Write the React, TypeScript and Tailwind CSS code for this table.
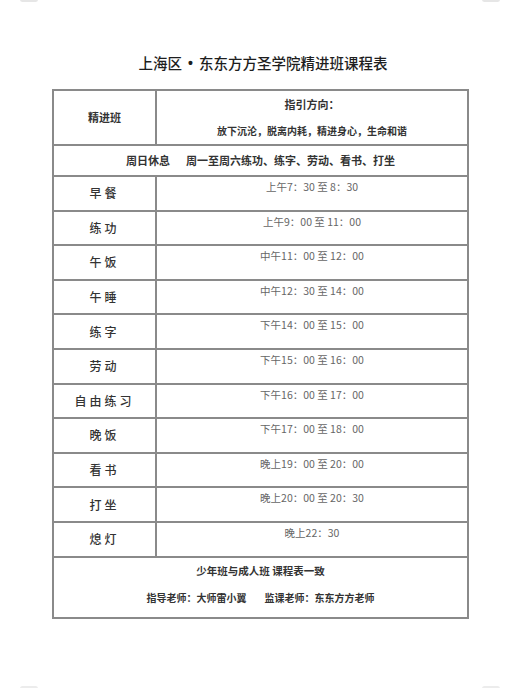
import React from 'react';

const schedule = [
  { label: '早餐', time: '上午7：30 至 8：30' },
  { label: '练功', time: '上午9：00 至 11：00' },
  { label: '午饭', time: '中午11：00 至 12：00' },
  { label: '午睡', time: '中午12：30 至 14：00' },
  { label: '练字', time: '下午14：00 至 15：00' },
  { label: '劳动', time: '下午15：00 至 16：00' },
  { label: '自由练习', time: '下午16：00 至 17：00' },
  { label: '晚饭', time: '下午17：00 至 18：00' },
  { label: '看书', time: '晚上19：00 至 20：00' },
  { label: '打坐', time: '晚上20：00 至 20：30' },
  { label: '熄灯', time: '晚上22：30' },
];

const font = { fontFamily: '"Noto Sans CJK SC", "Liberation Sans", sans-serif' };
const latin = { fontFamily: '"Liberation Sans", sans-serif' };

const App = () => {
  return (
    <div className="relative w-[520px] h-[688px] bg-white text-[#222]" style={font}>
      {/* faint page corner marks */}
      <div className="absolute left-[20px] top-[-3px] w-[18px] h-[5px] rounded-full bg-[#e6e6e6]" />
      <div className="absolute right-[20px] top-[-3px] w-[18px] h-[5px] rounded-full bg-[#e6e6e6]" />
      <div className="absolute left-[20px] bottom-[-3px] w-[18px] h-[5px] rounded-full bg-[#ececec]" />
      <div className="absolute right-[20px] bottom-[-3px] w-[18px] h-[5px] rounded-full bg-[#ececec]" />

      <div className="pt-[52px]">
        <h1 className="flex justify-center items-center pl-[6px] text-[14.5px] leading-[22px] font-medium text-[#1e1e1e]">
          <span>上海区</span>
          <span className="mx-[6px] text-[14px] font-bold" style={latin}>•</span>
          <span>东东方方圣学院精进班课程表</span>
        </h1>

        <div className="mt-[15px] ml-[52px] w-[417px] border-2 border-[#8a8a8a]">
          {/* header */}
          <div className="flex h-[55px] border-b-2 border-[#8a8a8a]">
            <div className="w-[103px] shrink-0 border-r-2 border-[#8a8a8a] flex items-center justify-center text-[11px] font-bold text-[#333]">
              精进班
            </div>
            <div className="flex-1 flex flex-col items-center pt-[5px] text-[11px] font-bold text-[#333]">
              <div className="leading-[16px]">指引方向：</div>
              <div className="mt-[11px] leading-[16px] text-[10px]">
                放下沉沦，脱离内耗，精进身心，生命和谐
              </div>
            </div>
          </div>

          <div className="h-[31px] border-b-2 border-[#8a8a8a] flex items-center justify-center text-[11px] font-bold text-[#333] gap-[16px]">
            <span>周日休息</span>
            <span>周一至周六练功、练字、劳动、看书、打坐</span>
          </div>

          {schedule.map((row) => (
            <div key={row.label} className="flex h-[34.6px] border-b-2 border-[#8a8a8a]">
              <div className="w-[103px] shrink-0 border-r-2 border-[#8a8a8a] flex items-center justify-center text-[12px] tracking-[3px] text-[#333] font-medium">
                {row.label}
              </div>
              <div className="flex-1 flex justify-center pt-[2px] text-[10.5px] leading-[16px] text-[#666]">
                {row.time}
              </div>
            </div>
          ))}

          {/* footer */}
          <div className="h-[59px] flex flex-col items-center pt-[5px] text-[10.5px] font-bold text-[#333]">
            <div className="leading-[16px]">少年班与成人班 课程表一致</div>
            <div className="mt-[11px] leading-[16px] text-[10px] flex gap-[18px]">
              <span>指导老师：大师雷小翼</span>
              <span>监课老师：东东方方老师</span>
            </div>
          </div>
        </div>
      </div>
    </div>
  );
};

export default App;
